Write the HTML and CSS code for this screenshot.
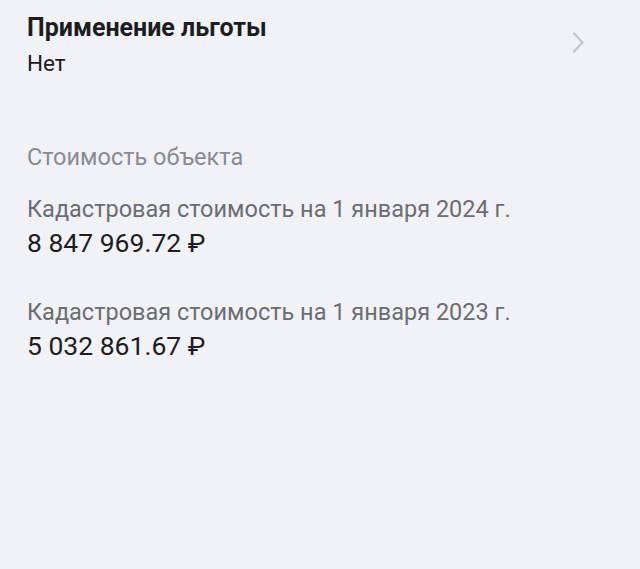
FILE: index.html
```html
<!DOCTYPE html>
<html lang="ru">
<head>
<meta charset="utf-8">
<link rel="stylesheet" href="styles.css">
</head>
<body>
<div class="page">
  <div class="row">
    <div class="row-text">
      <div class="title">Применение льготы</div>
      <div class="value">Нет</div>
    </div>
    <svg class="chev" width="18" height="24" viewBox="0 0 18 24"><path d="M5 2.5 L13.5 11.5 L5 20.5" fill="none" stroke="#c4c5ca" stroke-width="2.4" stroke-linecap="round" stroke-linejoin="round"/></svg>
  </div>
  <div class="section">
    <div class="section-title">Стоимость объекта</div>
    <div class="item">
      <div class="label">Кадастровая стоимость на 1 января 2024 г.</div>
      <div class="amount">8 847 969.72 ₽</div>
    </div>
    <div class="item">
      <div class="label">Кадастровая стоимость на 1 января 2023 г.</div>
      <div class="amount">5 032 861.67 ₽</div>
    </div>
  </div>
</div>
</body>
</html>
```
FILE: styles.css
```css
html, body { margin: 0; padding: 0; }
body { background: #f1f2f6; font-family: Roboto, "Noto Sans", sans-serif; height: 569px; overflow: hidden; }
.page { padding: 13px 0 0 27px; }
.row { display: flex; align-items: flex-start; padding-right: 53px; }
.row-text { flex: 1; }
.title { font-size: 25px; font-weight: 700; color: #1d1d1f; line-height: 30px; }
.value { font-size: 22.5px; color: #1d1d1f; line-height: 28px; margin-top: 6px; }
.chev { margin-top: 18px; }
.section { margin-top: 66px; }
.section-title { font-size: 23.5px; color: #8a8b90; line-height: 28px; }
.item { margin-top: 23px; }
.item + .item { margin-top: 38px; }
.label { font-size: 23.5px; color: #6c6d72; line-height: 30px; }
.amount { font-size: 26.5px; color: #1d1d1f; line-height: 32px; margin-top: 3px; }
```
